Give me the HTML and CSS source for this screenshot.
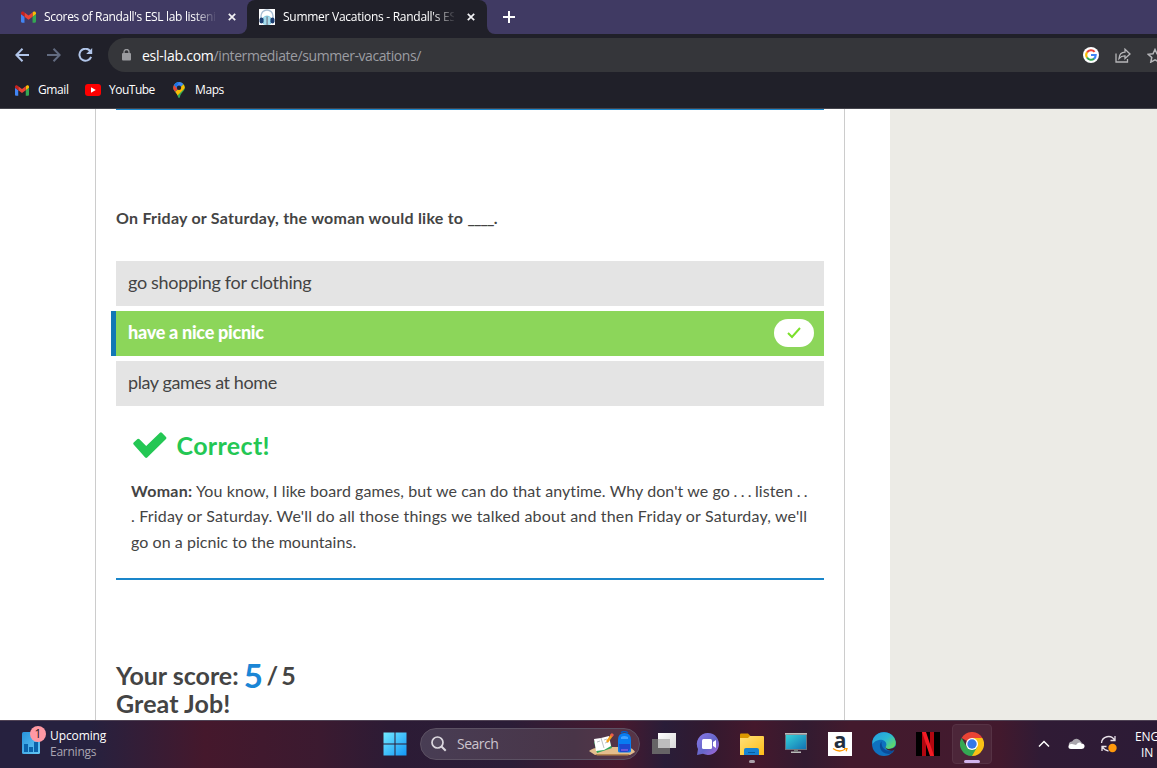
FILE: index.html
```
<!DOCTYPE html>
<html lang="en">
<head>
<meta charset="utf-8">
<title>Summer Vacations - Randall's ESL Cyber Listening Lab</title>
<link rel="stylesheet" href="styles.css">
</head>
<body>
<svg width="0" height="0" class="defs" aria-hidden="true">
  <symbol id="gmail" viewBox="0 0 16 12">
    <path fill="#4285f4" d="M1.1 12H3.7V5.6L0 2.8V10.9Q0 12 1.1 12Z"/>
    <path fill="#34a853" d="M12.3 12h2.6q1.1 0 1.1-1.1V2.8l-3.7 2.8Z"/>
    <path fill="#fbbc04" d="M12.3 1.1v4.5L16 2.8V1.7C16 .2 14.300-.5 13.1.5Z"/>
    <path fill="#ea4335" d="M3.7 5.600V1.100L8 4.300l4.300-3.200v4.500L8 8.800Z"/>
    <path fill="#c5221f" d="M0 1.700v1.100l3.700 2.800V1.100L2.900.5C1.700-.5 0 .2 0 1.700Z"/>
  </symbol>
</svg>
<div class="screen">
  <header class="browser">
    <div class="tabs">
      <div class="tab tab-idle">
        <svg class="tab-gmail" width="15" height="12"><use href="#gmail"/></svg>
        <span class="tab-title t1">Scores of Randall's ESL lab listening</span>
        <svg class="close" width="8" height="8" viewBox="0 0 8 8"><path d="M.8.8l6.400 6.400M7.200.8L.8 7.200"/></svg>
      </div>
      <div class="tab tab-active">
        <svg class="favicon" width="16" height="16" viewBox="0 0 16 16"><path fill="#fff" d="M0 0h16v16H0z"/><path d="M2 10V7a6 6 0 0 1 12 0v3" fill="none" stroke="#a9bfd4" stroke-width="1.400"/><path fill="#83cbe2" d="M4 8.500Q8 4.500 12 8.500V15Q8 17 4 15Z"/><path fill="#c8edf5" d="M5.500 8h1v7h-1zM9.500 8h1v7h-1z"/><path fill="#8a8993" d="M7.500 7.500h1.200V16H7.500z"/><rect x=".5" y="8.500" width="4" height="6" rx="2" fill="#1e3f73"/><rect x="11.500" y="8.500" width="4" height="6" rx="2" fill="#1e3f73"/></svg>
        <span class="tab-title t2">Summer Vacations - Randall's ESL</span>
        <svg class="close" width="8" height="8" viewBox="0 0 8 8"><path d="M.8.8l6.400 6.400M7.200.8L.8 7.200"/></svg>
      </div>
      <svg class="newtab" width="12" height="12" viewBox="0 0 12 12"><path d="M6 0v12M0 6h12" stroke="#fff" stroke-width="2"/></svg>
    </div>
    <div class="toolbar">
      <svg class="back" width="14" height="14" viewBox="0 0 14 14"><path d="M14 7H1.500M7.500.8L1.300 7l6.200 6.200"/></svg>
      <svg class="fwd" width="14" height="14" viewBox="0 0 14 14"><path d="M0 7h12.500M6.500.8L12.700 7l-6.200 6.200"/></svg>
      <svg class="reload" width="15" height="14" viewBox="0 0 15 14"><path d="M12 2.800A6 6 0 1 0 13.100 8.800"/><path class="solid" d="M14.200 0v6H8.200Z"/></svg>
      <div class="omnibox">
        <svg class="lock" width="9" height="12" viewBox="0 0 9 12"><rect y="4" width="9" height="7.500" rx="1" fill="#9b9ca0"/><path d="M2 5V3a2.500 2.500 0 0 1 5 0v2" fill="none" stroke="#9b9ca0" stroke-width="1.300"/></svg>
        <span class="url">esl-lab.com<i>/intermediate/summer-vacations/</i></span>
        <svg class="google" width="16" height="16" viewBox="0 0 16 16"><circle cx="8" cy="8" r="8" fill="#fff"/><g fill="none" stroke-width="2.100"><path d="M4 5.500A4.700 4.700 0 0 1 11.600 4.900" stroke="#ea4335"/><path d="M4 5.400a4.700 4.700 0 0 0 0 5.200" stroke="#fbbc04"/><path d="M4 10.500a4.700 4.700 0 0 0 7.200 1" stroke="#34a853"/><path d="M8 8h4.700a4.700 4.700 0 0 1-1.700 3.700" stroke="#4285f4"/></g></svg>
        <svg class="share" width="16" height="15" viewBox="0 0 16 15"><path d="M1 5.500V14h11.500v-3M4 10.500C4.300 6.500 6.500 4.300 10 4.200V1.200L15 6l-5 4.500V7.800C7.500 7.700 5.600 8.600 4 10.500Z" fill="none" stroke="#b6b6b9" stroke-width="1.300"/></svg>
        <svg class="star" width="16" height="15" viewBox="0 0 16 15"><path d="M8 1.500l2 4.300 4.700.5-3.500 3.200 1 4.600L8 11.800l-4.200 2.300 1-4.600L1.300 6.300 6 5.800Z" fill="none" stroke="#b6b6b9" stroke-width="1.500"/></svg>
      </div>
    </div>
    <nav class="bookmarks">
      <svg width="14" height="11"><use href="#gmail"/></svg><span class="b-gmail">Gmail</span>
      <svg width="16" height="12" viewBox="0 0 16 12"><rect width="16" height="12" rx="3" fill="#f00"/><path d="M6 3.300v5.400L10.800 6Z" fill="#fff"/></svg><span class="b-yt">YouTube</span>
      <svg width="12" height="16" viewBox="0 0 12 16"><defs><clipPath id="pin"><path d="M6 0a5.800 5.800 0 0 1 5.800 5.800C11.800 9.500 7.800 10.500 6.900 15.200Q6 16.600 5.100 15.200C4.200 10.500.2 9.500.2 5.800A5.800 5.800 0 0 1 6 0Z"/></clipPath></defs><g clip-path="url(#pin)"><path fill="#34a853" d="M0 0h12v16H0z"/><path fill="#fbbc04" d="M0 12 12 1v5L4 14Z"/><path fill="#ea4335" d="M0 1.500 6 6 1 11H0Z"/><path fill="#4285f4" d="M1 2.500 4 0h8L5 8Z"/><path fill="#1a73e8" d="M0 0h6L3.500 5 1 3Z"/></g><circle cx="6" cy="5.800" r="2.200" fill="#202029"/></svg><span class="b-maps">Maps</span>
    </nav>
  </header>

  <main class="page">
    <article class="lesson">
      <hr class="prev-rule">
      <h3 class="question">On Friday or Saturday, the woman would like to <span class="blank">____</span>.</h3>
      <ul class="answers">
        <li><span>go shopping for clothing</span></li>
        <li class="chosen"><span>have a nice picnic</span>
          <div class="pill"><svg width="14" height="12" viewBox="0 0 14 12"><path d="M1 6l4 4L13 1" fill="none" stroke="#7be02c" stroke-width="2"/></svg></div></li>
        <li><span class="last">play games at home</span></li>
      </ul>
      <div class="correct">
        <svg width="34" height="27" viewBox="0 0 34 27"><path fill="#24c754" d="M.6 12.500q-.8-1 .1-2L4.500 7.100q1-.8 2 .1L13.200 14 26.900.8q1-.9 2 0L33 4.900q.8 1 0 2L14.200 25.500q-1 .8-2 0Z"/></svg>
        <strong>Correct!</strong>
      </div>
      <p class="explain"><span class="l1"><b>Woman:</b> You know, I like board games, but we can do that anytime. Why don't we go<span class="dots"> . . . </span>listen<span class="dots"> . .</span></span><br><span class="l2">. Friday or Saturday. We'll do all those things we talked about and then Friday or Saturday, we'll</span><br><span class="l3">go on a picnic to the mountains.</span></p>
      <hr class="rule">
      <div class="score"><div class="score-line">Your score: <em>5</em><span class="total"> / 5</span></div><div class="great">Great Job!</div></div>
    </article>
    <aside class="side"></aside>
  </main>

  <footer class="taskbar">
    <div class="widget">
      <svg width="25" height="29" viewBox="0 0 25 29"><defs><linearGradient id="w" x2="1" y2="1"><stop stop-color="#2794dc"/><stop offset="1" stop-color="#66c8f5"/></linearGradient></defs><rect x="1" y="6" width="18" height="22" rx="1.500" fill="url(#w)"/><path fill="#0b63ab" d="M3 18h4v8H3zM8 21h4v5H8zM13 16h4v10h-4z"/><circle cx="17" cy="8" r="8" fill="#ff99a4"/><text x="17" y="12.300" text-anchor="middle" class="badge">1</text></svg>
      <div class="widget-text"><div class="up">Upcoming</div><div class="earn">Earnings</div></div>
    </div>
    <div class="dock">
      <svg class="start" width="24" height="24" viewBox="0 0 24 24"><defs><linearGradient id="s" x2="1" y2="1"><stop stop-color="#72eaff"/><stop offset="1" stop-color="#1296f5"/></linearGradient></defs><path fill="url(#s)" d="M.5.500h11v11H.5zM12.500.500h11v11h-11zM.5 12.500h11v11H.5zM12.500 12.500h11v11h-11z"/></svg>
      <div class="search">
        <svg width="16" height="16" viewBox="0 0 16 16"><path d="M10.500 10.500 14.700 14.700" stroke="#dcd8df" stroke-width="2"/><circle cx="6.500" cy="6.500" r="5.500" fill="#554b60" stroke="#dcd8df" stroke-width="1.700"/></svg>
        <span>Search</span>
        <svg class="art" width="46" height="26" viewBox="0 0 46 26"><path fill="#e3bd8d" d="M0 20Q3 17 12 16H38Q44 17 46 21L41 24H6Z"/><path fill="#b7864f" d="M6 23h35l-2 1.500H8Z"/><path fill="#2fa65b" d="M5 11l14-5 4 11-15 5Z"/><path fill="#fff" d="M5 8l7-1 8-2 2 10-7 4-8 1Z"/><path d="M12 7l3 10M8 11l3-1M15 9l3-1M16 12l3-1" stroke="#aab0b5" fill="none" stroke-width=".8"/><path d="M18 11 23 4" stroke="#f4a01c" stroke-width="2.500"/><path d="m22 5 2-2" stroke="#e85c4a" stroke-width="3"/><path fill="#087cf1" d="M29 20V9Q29 2 35.500 2T42 9v11q0 1.500-2 1.500h-9q-2 0-2-1.500Z"/><path d="M32 2q3-3 7 0" fill="none" stroke="#075ac0" stroke-width="1.500"/><path fill="#43a2ff" d="M32 6q3-2 7 0v2h-7z"/><path fill="#1d47cf" d="M30 13h11v5q-1 3-3 3h-7Z"/><path stroke="#b26ae8" d="M32 19h7"/></svg>
      </div>
      <svg class="tv" width="24" height="24" viewBox="0 0 24 24"><defs><linearGradient id="tg" x2="1" y2="1"><stop stop-color="#fff"/><stop offset="1" stop-color="#d8d8d8"/></linearGradient></defs><path fill="#666466" d="M0 7h18v15H0z"/><path fill="url(#tg)" d="M6 1h18v15H6z"/><path fill="#bdbdbd" d="M6 7h12v9H6z"/></svg>
      <svg class="chat" width="24" height="24" viewBox="0 0 24 24"><defs><linearGradient id="cg" x2="1" y2="1"><stop stop-color="#8a79e8"/><stop offset=".55" stop-color="#6566c9"/><stop offset="1" stop-color="#a868db"/></linearGradient></defs><path fill="url(#cg)" d="M12 1a11 11 0 1 1-5 20.800L1 23l1-6A11 11 0 0 1 12 1Z"/><rect x="6" y="7" width="10" height="10" rx="1.500" fill="#fff"/><path fill="#fff" d="m17 10 3-2v8l-3-2Z"/></svg>
      <span class="folder"><svg width="24" height="23" viewBox="0 0 24 23"><defs><linearGradient id="fg" x2="1" y2="1"><stop stop-color="#ffe17a"/><stop offset="1" stop-color="#ffbd18"/></linearGradient></defs><path fill="#dc9800" d="M0 8V1.500Q0 .5 1 .5h7l3 3V8Z"/><path fill="url(#fg)" d="M0 5h8l2-2h13q1 0 1 1v18H0Z"/><path fill="#1782d2" d="M4 22v-5q0-2 2-2h11q2 0 2 2v5Z"/><path fill="#075c9e" d="M8 19h7v1H8z"/></svg><i></i></span>
      <svg class="pc" width="22" height="21" viewBox="0 0 22 21"><defs><linearGradient id="pg" x2="1" y2="1"><stop stop-color="#35d1d8"/><stop offset="1" stop-color="#1373b4"/></linearGradient></defs><path fill="#6b737c" d="M0 0h22v17H0z"/><path fill="url(#pg)" d="M1 2h20v14H1z"/><path fill="#bbb" d="M0 0h22v1.500H0zM6 18.500h10V20H6z"/><path fill="#777" d="M9 16h4v3H9z"/></svg>
      <div class="amazon"><span>a</span><svg width="16" height="5" viewBox="0 0 16 5"><path d="M1 .5q6 4.500 12 .8M12 .6l3-.1-.9 2.700" fill="none" stroke="#ff9900" stroke-width="1.300"/></svg></div>
      <svg class="edge" width="24" height="24" viewBox="0 0 24 24"><defs><linearGradient id="eg" y2=".8"><stop stop-color="#259de0"/><stop offset=".55" stop-color="#2cb8d3"/><stop offset="1" stop-color="#68dc59"/></linearGradient></defs><circle cx="12" cy="12" r="12" fill="#0f71bf"/><path fill="url(#eg)" d="M.5 9C3-2 20-3 23.500 9c1.200 5-3 8-7.500 8-2 0-3.500-.8-2.500-2 3-4-2-8-6.500-7Q3 8.500.5 12Z"/><path fill="#0a4b98" d="M9.500 9.500C6 13 8 22 17 22q3-.5 5.200-4.500C17 20 9 19 9.500 9.500Z"/><path fill="#431a2d" d="M13.500 14c-1 3 4 6 9 4l1.500-2 .5-3Q22 17 16 17q-3-1-2.500-3Z"/></svg>
      <svg class="netflix" width="24" height="24" viewBox="0 0 24 24"><path d="M0 0h24v24H0z"/><path fill="#b20710" d="M6 0h4v24H6zM14 0h4v24h-4z"/><path fill="#f21c25" d="M6 0h4l8 24h-4Z"/></svg>
      <div class="chrome"><svg width="24" height="24" viewBox="0 0 24 24"><path fill="#ea4335" d="M12 12 1.600 6A12 12 0 0 1 22.400 6Z"/><path fill="#fbc116" d="M12 12V6h10.400A12 12 0 0 1 12 24Z"/><path fill="#34a853" d="M1.600 6A12 12 0 0 0 12 24l5.200-9L12 12l-5.200 3Z"/><circle cx="12" cy="12" r="6" fill="#fff"/><circle cx="12" cy="12" r="4.700" fill="#3378e9"/></svg><i></i></div>
    </div>
    <div class="tray">
      <svg width="12" height="8" viewBox="0 0 12 8"><path d="M1 6.500 6 1.500l5 5" fill="none" stroke="#fff" stroke-width="1.500"/></svg>
      <svg class="cloud" width="17" height="12" viewBox="0 0 17 12"><path fill="#aaa6ad" d="M1 8Q0 4 4 3.500 7-1 11.500 2L14 5 5 10Z"/><path fill="#fff" d="M3 11Q0 11 .5 8 1 5.500 4 6L8 7q3-4 5.500-1.500Q17 5.500 16.500 9q-.5 2-3 2Z"/></svg>
      <svg class="sync" width="18" height="18" viewBox="0 0 18 18"><path d="M1.500 8A7 7 0 0 1 14.500 5M15 1v4.500h-4.500M2 16v-4.500h4.500M2.500 12q2 3.500 6 4" fill="none" stroke="#e9e1e9" stroke-width="1.300"/><circle cx="12.500" cy="13" r="4.200" fill="#ff990c"/></svg>
      <div class="lang">ENG<br><span>IN</span></div>
    </div>
  </footer>
</div>
</body>
</html>
```
FILE: styles.css
```
* { box-sizing: border-box; }
body { margin: 0; overflow: hidden; background: #fff; }
svg { display: block; flex: none; }
.defs { position: absolute; }
.screen { width: 1157px; height: 768px; display: flex; flex-direction: column; overflow: hidden; }
.browser, .taskbar { font-family: "Open Sans", "Noto Sans", sans-serif; font-size: 12px; color: #fff; white-space: nowrap; }
.browser { height: 109px; flex: none; background: #202029; border-bottom: 1px solid #45454d; }

.tabs { height: 34px; display: flex; background: linear-gradient(#202029, #202029) 239px 26px / 256px 8px no-repeat, #403a63; }
.tab { display: flex; align-items: center; height: 34px; }
.tab-idle { width: 247px; padding-left: 21px; background: #403a63; border-radius: 0 0 8px 0; }
.tab-active { width: 240px; padding-left: 12px; background: #202029; border-radius: 8px 8px 0 0; }
.tab-title { overflow: hidden; width: 171px; margin-left: 8px; padding-bottom: 1px; letter-spacing: -.33px; -webkit-mask-image: linear-gradient(90deg, #000 150px, transparent 173px); mask-image: linear-gradient(90deg, #000 150px, transparent 173px); }
.t2 { letter-spacing: -.27px; }
.close { margin-left: 13px; fill: none; stroke: #f2f2f5; stroke-width: 1.7; }
.newtab { box-sizing: content-box; padding: 11px 16px; background: #403a63; border-bottom-left-radius: 8px; }

.toolbar { height: 42px; display: flex; align-items: center; padding-left: 15px; }
.toolbar > svg { fill: none; stroke: #b1c5e9; stroke-width: 2; }
.toolbar .fwd { stroke: #626b80; margin-left: 18px; }
.toolbar .reload { margin-left: 17px; }
.toolbar .reload .solid { fill: #b1c5e9; stroke: none; }
.omnibox { margin-left: 15px; flex: 1; height: 34px; display: flex; align-items: center; background: #35363a; border-radius: 17px 0 0 17px; padding-left: 14px; overflow: hidden; }
.url { width: 933px; flex: none; margin-left: 11px; font-size: 14px; letter-spacing: -.24px; }
.url i { color: #9c9da2; font-style: normal; letter-spacing: -.42px; }
.google { margin-left: 8px; }
.share { margin-left: 16px; }
.star { margin-left: 16px; }

.bookmarks { height: 28px; display: flex; align-items: center; padding-left: 15px; }
.bookmarks span { letter-spacing: -.4px; padding-bottom: 1px; }
.bookmarks .b-gmail { width: 38px; margin: 0 9px; }
.bookmarks .b-yt { width: 56px; margin: 0 8px; letter-spacing: -.5px; }
.bookmarks .b-maps { margin-left: 10px; letter-spacing: -.4px; }

.page { height: 611px; flex: none; display: flex; overflow: hidden; background: #fff; font-family: Lato, sans-serif; color: #444; }
.lesson { width: 750px; margin-left: 95px; padding: 0 20px; border: solid #ccc; border-width: 0 1px; }
.side { width: 267px; margin-left: 45px; background: #ecebe6; }
hr { margin: 0; border: 0; background: #1a86ca; }
.prev-rule { height: 1px; }
.question { margin: 95px 0 0; font-size: 16px; line-height: 26px; font-weight: 700; letter-spacing: .24px; }
.blank { letter-spacing: -.9px; }
.answers { list-style: none; margin: 30px 0 0; padding: 0; display: grid; gap: 5px; font-size: 18px; }
.answers li { height: 45px; padding: 0 10px 0 12px; display: flex; align-items: center; background: #e4e4e4; letter-spacing: -.31px; }
.answers span { padding-bottom: 3px; }
.answers .last { letter-spacing: -.4px; }
.answers .chosen { margin-left: -5px; border-left: 5px solid #1278b5; justify-content: space-between; background: #8cd65a; color: #fff; font-weight: 900; letter-spacing: -.27px; }
.pill { width: 40px; height: 28px; margin-bottom: 1px; border-radius: 14px; display: grid; place-items: center; background: #fff; }
.correct { margin: 24px 0 0 17px; height: 30px; display: flex; align-items: center; color: #24c754; font-size: 25px; }
.correct strong { margin-left: 9.5px; letter-spacing: .35px; }
.explain { margin: 17.6px 0 0 15px; font-size: 16px; line-height: 25.500px; white-space: nowrap; }
.l1 { letter-spacing: .08px; }
.l1 b { letter-spacing: .3px; }
.dots { letter-spacing: -.38px; }
.l2 { letter-spacing: .17px; }
.l3 { letter-spacing: .05px; }
.rule { height: 2px; margin-top: 23.9px; }
.score { margin-top: 76px; font-size: 25px; line-height: 28px; font-weight: 700; }
.score-line { height: 33px; line-height: 38px; }
.score em { font-size: 33px; font-style: normal; color: #1a86d6; line-height: 1; vertical-align: -3px; margin-left: -1px; }
.total { letter-spacing: -1.5px; margin-left: -1px; }
.great { letter-spacing: .1px; }

.taskbar { height: 48px; flex: none; display: flex; border-top: 1px solid #504355; background: linear-gradient(90deg, #26213f 0, #26213f 90px, #45182c 205px, #3b1a30 320px, #2c1b35 390px, #2b1d37 510px, #48192e 620px, #291d38 665px, #33192f 710px, #45182c 755px, #321b31 805px, #431a2d 850px, #421a2e 970px, #42192d 1000px, #301b35 1040px, #2c1b36 1157px); }
.widget { width: 383px; flex: none; display: flex; padding-left: 21px; }
.widget > svg { margin-top: 5px; }
.badge { font: 12px "Open Sans", sans-serif; fill: #231a20; }
.widget-text { margin: 7px 0 0 4px; line-height: 16px; }
.up { letter-spacing: -.1px; }
.earn { color: #aaa5b2; letter-spacing: -.25px; }
.dock { width: 655px; flex: none; padding-bottom: 2px; display: flex; align-items: center; }
.search { width: 220px; height: 32px; margin-left: 13px; display: flex; align-items: center; padding-left: 10px; border: 1px solid #5c5163; border-radius: 16px; background: linear-gradient(90deg, #483d54, #493548 70%, #583547); color: #ccc4ce; font-size: 14px; }
.search span { width: 44px; margin-left: 10px; letter-spacing: -.5px; }
.art { margin-left: 88px; }
.tv { margin-left: 12px; }
.chat { margin-left: 20px; }
.folder { width: 24px; height: 30px; margin: 8px 0 0 20px; display: grid; }
.folder i { width: 6px; height: 3px; margin: 4px auto 0; border-radius: 2px; background: #aaa0a9; }
.pc { margin-left: 21px; }
.amazon { width: 24px; height: 24px; margin-left: 21px; display: flex; flex-direction: column; align-items: center; background: #fff; color: #232f3e; font: 700 21px/16px "Open Sans", sans-serif; }
.edge { margin-left: 20px; }
.netflix { margin-left: 20px; }
.chrome { width: 40px; height: 40px; margin-left: 12px; padding-top: 7px; display: flex; flex-direction: column; align-items: center; border: 1px solid #563244; border-radius: 4px; background: #4c2639; }
.chrome i { width: 16px; height: 3px; margin-top: 4px; border-radius: 2px; background: #d1b4ed; }
.tray { flex: none; padding-bottom: 1px; display: flex; align-items: center; }
.cloud { margin-left: 18px; }
.sync { margin-left: 15px; }
.lang { width: 24px; margin-left: 17px; padding-top: 2px; line-height: 16px; text-align: center; letter-spacing: -.2px; }
```
